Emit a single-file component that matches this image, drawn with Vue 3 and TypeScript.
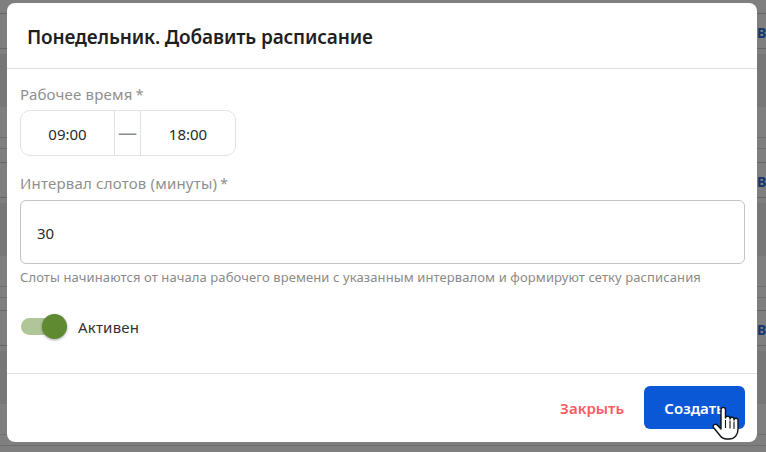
<script setup lang="ts">
const rows = [0, 1, 2]
</script>

<template>
  <div class="screen">
    <div class="page">
      <div v-for="r in rows" :key="r" class="group">
        <div class="row"><span class="row-text">Вы</span></div>
        <div class="dark"></div>
        <div class="ruled"></div>
        <div class="ruled second-rule"></div>
      </div>
    </div>
    <div class="backdrop"></div>

    <div class="wrap">
      <div class="modal">
        <header class="head">
          <h2>Понедельник. Добавить расписание</h2>
        </header>
        <div class="body">
          <label class="label">Рабочее время<span class="req">*</span></label>
          <div class="timebox">
            <div class="time first">09:00</div>
            <div class="dash">—</div>
            <div class="time">18:00</div>
          </div>
          <label class="label second">Интервал слотов (минуты)<span class="req">*</span></label>
          <div class="input">30</div>
          <div class="help">Слоты начинаются от начала рабочего времени с указанным интервалом и формируют сетку расписания</div>
          <div class="switch-row">
            <div class="switch"><div class="knob"></div></div>
            <span class="switch-label">Активен</span>
          </div>
        </div>
        <footer class="foot">
          <button class="btn close">Закрыть</button>
          <button class="btn create">Создать</button>
        </footer>
      </div>
    </div>

    <svg class="cursor" width="28" height="36" viewBox="0 0 28 36">
      <path
        d="M9 4c0-3.5 4.5-3.5 4.5 0v8c0-2.4 4.5-2.4 4.5 0v1c0-2.4 4-2.4 4 0v1c0-2.4 4-2.4 4 0v9c0 6-3.5 10-8.5 10h-3c-3.5 0-5-1.5-6.5-3.5L1.5 21.5c-1.5-2.4 2-4.5 4-2.2L9 23z"
        fill="#fff"
        stroke="#111"
        stroke-width="1.4"
        stroke-linejoin="round"
      />
      <path d="M13.5 14v8M18 14.5v8M22 15.5v7.5" stroke="#111" stroke-width="1.1" fill="none" />
    </svg>
  </div>
</template>

<style scoped>
.screen {
  position: relative;
  width: 766px;
  height: 452px;
  overflow: hidden;
  font-family: "Noto Sans", "Open Sans", sans-serif;
  background: #fff;
}
.page {
  padding-top: 13px;
}
.group {
  height: 148.5px;
  box-sizing: border-box;
}
.row {
  height: 36px;
  box-sizing: border-box;
  padding-top: 3px;
  border-top: 1px solid #ccc;
  border-bottom: 1px solid #ccc;
  display: flex;
  align-items: center;
  justify-content: flex-end;
}
.row-text {
  width: 9px;
  overflow: hidden;
  white-space: nowrap;
  font-size: 14px;
  font-weight: 700;
  color: #2a6fe0;
}
.dark {
  margin-top: 5px;
  height: 53px;
  background: #eee;
}
.ruled {
  margin-top: 30px;
  height: 0;
  border-top: 1px solid #ddd;
}
.second-rule {
  margin-top: 10px;
}
.backdrop {
  position: absolute;
  inset: 0;
  background: rgba(0, 0, 0, 0.5);
}
.wrap {
  position: absolute;
  inset: 3px 9px 10px 7px;
}
.modal {
  height: 100%;
  display: flex;
  flex-direction: column;
  background: #fff;
  border-radius: 8px;
  box-sizing: border-box;
}
.head {
  height: 66px;
  flex: none;
  box-sizing: border-box;
  border-bottom: 1px solid #dedede;
  display: flex;
  align-items: center;
  padding: 3px 20px 0;
}
.head h2 {
  margin: 0;
  font-size: 19px;
  font-weight: 600;
  letter-spacing: -0.15px;
  color: #1f1f1f;
}
.body {
  flex: 1;
  padding: 15px 12px 0 13px;
  display: flex;
  flex-direction: column;
}
.label {
  font-size: 15px;
  line-height: 20px;
  letter-spacing: 0.2px;
  color: #8f8f8f;
  height: 22px;
}
.label.second {
  margin-top: 17px;
}
.req {
  margin-left: 3px;
  font-size: 14px;
}
.timebox {
  margin-top: 4px;
  width: 216px;
  height: 46px;
  box-sizing: border-box;
  border: 1px solid #e2e2e2;
  border-radius: 10px;
  display: flex;
  align-items: center;
  font-size: 15px;
  color: #2b2b2b;
}
.time {
  flex: 1;
  text-align: center;
  padding-top: 2px;
}
.time.first {
  flex: none;
  width: 93px;
}
.dash {
  width: 27px;
  flex: none;
  height: 100%;
  box-sizing: border-box;
  border-left: 1px solid #e2e2e2;
  border-right: 1px solid #e2e2e2;
  display: flex;
  align-items: center;
  justify-content: center;
  color: #8c8c8c;
  font-size: 19px;
}
.input {
  margin-top: 5px;
  height: 64px;
  box-sizing: border-box;
  border: 1px solid #c4c4c4;
  border-radius: 6px;
  padding: 2px 16px 0;
  display: flex;
  align-items: center;
  font-size: 15px;
  color: #2b2b2b;
}
.help {
  margin-top: 4px;
  font-size: 13px;
  line-height: 18px;
  letter-spacing: 0.1px;
  color: #8a8a8a;
  white-space: nowrap;
}
.switch-row {
  margin-top: 27px;
  display: flex;
  align-items: center;
  height: 26px;
}
.switch {
  position: relative;
  width: 44px;
  height: 17px;
  margin-left: 1px;
  border-radius: 9px;
  background: #b0c598;
}
.knob {
  position: absolute;
  top: -4px;
  right: -2px;
  width: 25px;
  height: 25px;
  border-radius: 50%;
  background: #5f8a31;
  box-shadow: 0 1px 3px rgba(0, 0, 0, 0.35);
}
.switch-label {
  margin-left: 13px;
  padding-top: 2px;
  font-size: 15px;
  letter-spacing: 0.2px;
  color: #333;
}
.foot {
  flex: none;
  height: 69px;
  box-sizing: border-box;
  border-top: 1px solid #e0e0e0;
  padding: 12px 12px 13px 0;
  display: flex;
  justify-content: flex-end;
  align-items: stretch;
}
.btn {
  border: 0;
  font-family: inherit;
  font-size: 15px;
  font-weight: 600;
  border-radius: 6px;
  padding: 0;
}
.close {
  background: #fff;
  color: #ff5a5f;
  margin-right: 20px;
}
.create {
  background: #0a58d6;
  color: #fff;
  width: 101px;
}
.cursor {
  position: absolute;
  left: 712px;
  top: 406px;
}
</style>
